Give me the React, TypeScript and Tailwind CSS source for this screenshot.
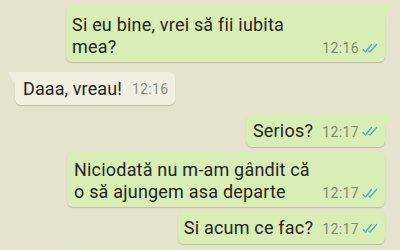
import React from "react";

const Check = () => (
  <svg width="16" height="11" viewBox="0 0 16 11" className="ml-[3px] shrink-0">
    <path d="M1 6.5 L3.5 9 L9.5 1.5" fill="none" stroke="#55aebd" strokeWidth="1.4" strokeLinecap="round" strokeLinejoin="round" />
    <path d="M7 8.2 L8 9 L14.5 1.5" fill="none" stroke="#55aebd" strokeWidth="1.4" strokeLinecap="round" strokeLinejoin="round" />
  </svg>
);

const OutTail = () => (
  <svg width="8" height="14" viewBox="0 0 8 14" className="absolute right-[-7px] top-0">
    <path d="M0 0 L8 0 L0 14 Z" fill="#d9edb6" />
  </svg>
);

const InTail = () => (
  <svg width="8" height="14" viewBox="0 0 8 14" className="absolute left-[-7px] top-0">
    <path d="M8 0 L0 0 L8 14 Z" fill="#f0efe1" />
  </svg>
);

function Out({ lines, time, tail, className }: { lines: string[]; time: string; tail?: boolean; className?: string }) {
  return (
    <div className={`relative bg-[#d9edb6] ${tail ? "rounded-[6px] rounded-tr-none" : "rounded-[6px]"} shadow-[0_1px_1px_rgba(120,120,90,0.35)] ${className ?? ""}`}>
      {tail && <OutTail />}
      <div className="flex items-end justify-between">
        <div className="flex-1 whitespace-nowrap text-[18px] leading-[22px] tracking-[0.2px] text-[#232623]">
          {lines.map((l, i) => (
            <div key={i}>{l}</div>
          ))}
        </div>
        <div className="shrink-0 whitespace-nowrap flex items-center ml-[9px] text-[14px] leading-[20px] tracking-[0.4px] text-[#7d8b78]">
          {time}
          <Check />
        </div>
      </div>
    </div>
  );
}

export default function App() {
  return (
    <div
      className="w-[400px] h-[250px] overflow-hidden bg-[#e5e2cd] flex flex-col pt-[5px]"
      style={{ fontFamily: "Roboto, 'Noto Sans', sans-serif" }}
    >
      <div className="flex justify-end pr-[15px]">
        <Out className="w-[319px] pl-[6px] pr-[7px] pt-[9px] pb-[4px]" lines={["Si eu bine, vrei să fii iubita", "mea?"]} time="12:16" tail />
      </div>
      <div className="flex justify-start pl-[15px] mt-[10px]">
        <div className="relative bg-[#f0efe1] rounded-[6px] rounded-tl-none shadow-[0_1px_1px_rgba(120,120,90,0.35)] pl-[8px] pr-[7px] h-[33px] flex items-center">
          <InTail />
          <span className="whitespace-nowrap text-[18px] leading-[22px] tracking-[0.1px] text-[#232623]">Daaa, vreau!</span>
          <span className="whitespace-nowrap ml-[10px] text-[14px] tracking-[0.3px] text-[#8a8f84] mt-[2px]">12:16</span>
        </div>
      </div>
      <div className="flex justify-end pr-[15px] mt-[9px]">
        <Out className="pl-[7px] pr-[7px] h-[33px] flex flex-col justify-center" lines={["Serios?"]} time="12:17" tail />
      </div>
      <div className="flex justify-end pr-[15px] mt-[5px]">
        <Out className="w-[318px] pl-[7px] pr-[7px] pt-[7px] pb-[4px]" lines={["Niciodată nu m-am gândit că", "o să ajungem asa departe"]} time="12:17" />
      </div>
      <div className="flex justify-end pr-[15px] mt-[4px]">
        <Out className="pl-[6px] pr-[7px] h-[33px] flex flex-col justify-center" lines={["Si acum ce fac?"]} time="12:17" />
      </div>
      <div className="flex justify-end pr-[15px] mt-[4px]">
        <div className="w-[318px] h-[40px] bg-[#d9edb6] rounded-[6px]" />
      </div>
    </div>
  );
}
